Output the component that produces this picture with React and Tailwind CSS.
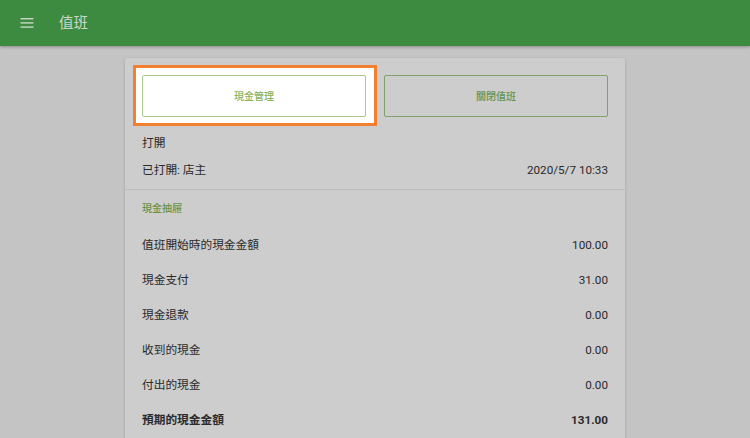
import React from "react";

const rows = [
  ["值班開始時的現金金額", "100.00"],
  ["現金支付", "31.00"],
  ["現金退款", "0.00"],
  ["收到的現金", "0.00"],
  ["付出的現金", "0.00"],
];

export default function App() {
  return (
    <div className="h-[438px] w-[750px] overflow-hidden bg-[#c4c4c4] font-['Roboto','Noto_Sans_CJK_TC',sans-serif] text-[11.7px] text-[#2a2a2a]">
      <header className="flex h-[46px] items-center bg-[#3d8b40] text-[#c8d8c8] shadow-[0_1px_3px_rgba(0,0,0,0.3)]">
        <svg className="ml-[19.5px] h-[14px] w-[14px]" viewBox="0 0 14 14" fill="currentColor">
          <rect x="0.5" y="2" width="13" height="1.4" />
          <rect x="0.5" y="6.2" width="13" height="1.4" />
          <rect x="0.5" y="10.4" width="13" height="1.4" />
        </svg>
        <span className="ml-[25.5px] mt-[1px] text-[14.5px]">值班</span>
      </header>
      <main className="mx-auto mt-3 w-[500px] rounded-[2px] bg-[#cdcdcd] pb-8 shadow-[0_1px_3px_rgba(0,0,0,0.2)]">
        <div className="flex gap-[18px] pl-[17px] pt-[17px]">
          <div className="relative h-[42px] w-[224px]">
            <div className="absolute -left-[9px] -right-[11px] -top-[10px] -bottom-[9px] border-[3px] border-[#f38030] bg-white" />
            <button className="relative h-full w-full rounded-[2px] border border-[#a9c98c] bg-white pt-[1px] text-[10px] font-medium text-[#86b45f]">
              現金管理
            </button>
          </div>
          <button className="h-[42px] w-[224px] rounded-[2px] border border-[#7fa26c] pt-[1px] text-[10px] font-medium text-[#66934a]">
            關閉值班
          </button>
        </div>
        <div className="mt-[13px] flex h-[27px] items-center px-[17px]">打開</div>
        <div className="flex h-[28px] items-center justify-between px-[17px]">
          <span>已打開: 店主</span>
          <span>2020/5/7 10:33</span>
        </div>
        <div className="mt-[4px] border-t border-[#bdbdbd]" />
        <div className="flex h-[38px] items-center px-[17px] pb-[1px] text-[10px] font-medium text-[#66934a]">現金抽屜</div>
        {rows.map(([label, value]) => (
          <div key={label} className="flex h-[35px] items-center justify-between px-[17px]">
            <span>{label}</span>
            <span>{value}</span>
          </div>
        ))}
        <div className="flex h-[35px] items-center justify-between px-[17px] font-bold">
          <span>預期的現金金額</span>
          <span>131.00</span>
        </div>
      </main>
    </div>
  );
}
